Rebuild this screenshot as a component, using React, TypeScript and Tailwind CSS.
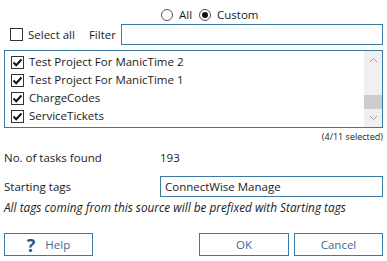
import { useState } from 'react'

const items = [
  'Test Project For ManicTime 2',
  'Test Project For ManicTime 1',
  'ChargeCodes',
  'ServiceTickets',
]

function Check({ checked }: { checked: boolean }) {
  return (
    <span className="w-[13px] h-[13px] border border-[#333] bg-white flex items-center justify-center shrink-0">
      {checked && (
        <svg width="11" height="11" viewBox="0 0 11 11">
          <path d="M1.5 5.5 L4.2 8.2 L9.5 2.5" fill="none" stroke="#111" strokeWidth="2" />
        </svg>
      )}
    </span>
  )
}

function Radio({ on }: { on: boolean }) {
  return (
    <span className="w-[12px] h-[12px] rounded-full border border-[#555] bg-white flex items-center justify-center shrink-0">
      {on && <span className="w-[6px] h-[6px] rounded-full bg-[#111]" />}
    </span>
  )
}

export default function App() {
  const [mode] = useState<'all' | 'custom'>('custom')

  return (
    <div
      className="w-[387px] h-[261px] bg-white text-[11.5px] text-[#1b1b1b] px-[4px] flex flex-col"
      style={{ fontFamily: '"Open Sans", "Noto Sans", sans-serif' }}
    >
      <div className="flex items-center gap-[7px] pl-[157px] mt-[8px] h-[14px]">
        <span className="flex items-center gap-[6px]">
          <Radio on={mode === 'all'} />
          All
        </span>
        <span className="flex items-center gap-[6px]">
          <Radio on={mode === 'custom'} />
          Custom
        </span>
      </div>

      <div className="flex items-center mt-[2px] h-[21px]">
        <span className="flex items-center gap-[5px] pl-[6px]">
          <Check checked={false} />
          Select all
        </span>
        <span className="ml-[14px]">Filter</span>
        <input className="ml-[5px] flex-1 h-[21px] border border-[#3a7aa5] outline-none" />
      </div>

      <div className="mt-[5px] h-[78px] border border-[#3a7aa5] flex">
        <div className="flex-1 flex flex-col pt-[2px]">
          {items.map((t) => (
            <div key={t} className="flex items-center gap-[5px] h-[18px] pl-[6px]">
              <Check checked />
              {t}
            </div>
          ))}
        </div>
        <div className="w-[18px] bg-[#f0f0f0] flex flex-col items-center">
          <svg width="9" height="18" viewBox="0 0 9 18" className="mt-[1px]">
            <path d="M1 10 L4.5 6.5 L8 10" fill="none" stroke="#a0a0a0" strokeWidth="1" />
          </svg>
          <div className="flex-1" />
          <div className="w-full h-[14px] bg-[#cdcdcd]" />
          <svg width="9" height="18" viewBox="0 0 9 18">
            <path d="M1 7 L4.5 10.5 L8 7" fill="none" stroke="#a0a0a0" strokeWidth="1" />
          </svg>
        </div>
      </div>

      <div className="text-right text-[9px] mt-[3px] leading-[12px]">(4/11 selected)</div>

      <div className="grid grid-cols-[156px_1fr] items-center mt-[6px]">
        <span className="h-[18px] leading-[18px]">No. of tasks found</span>
        <span>193</span>
      </div>

      <div className="grid grid-cols-[156px_1fr] items-center mt-[9px]">
        <span>Starting tags</span>
        <input
          readOnly
          value="ConnectWise Manage"
          className="h-[21px] border border-[#3a7aa5] px-[4px] outline-none text-[11.5px]"
        />
      </div>

      <div className="italic text-[11.8px] mt-[2px] leading-[16px]">
        All tags coming from this source will be prefixed with Starting tags
      </div>

      <div className="flex mt-[18px] h-[23px]">
        <button className="w-[89px] h-[23px] border border-[#3a7aa5] flex items-center justify-center gap-[10px] text-[#3d6a93]">
          <span className="text-[18px] font-bold text-[#245a87] leading-none">?</span>
          Help
        </button>
        <div className="flex-1" />
        <button className="w-[90px] h-[23px] border border-[#3a7aa5] text-[#3d6a93]">OK</button>
        <button className="w-[89px] h-[23px] ml-[5px] border border-[#3a7aa5] text-[#3d6a93]">Cancel</button>
      </div>
    </div>
  )
}
